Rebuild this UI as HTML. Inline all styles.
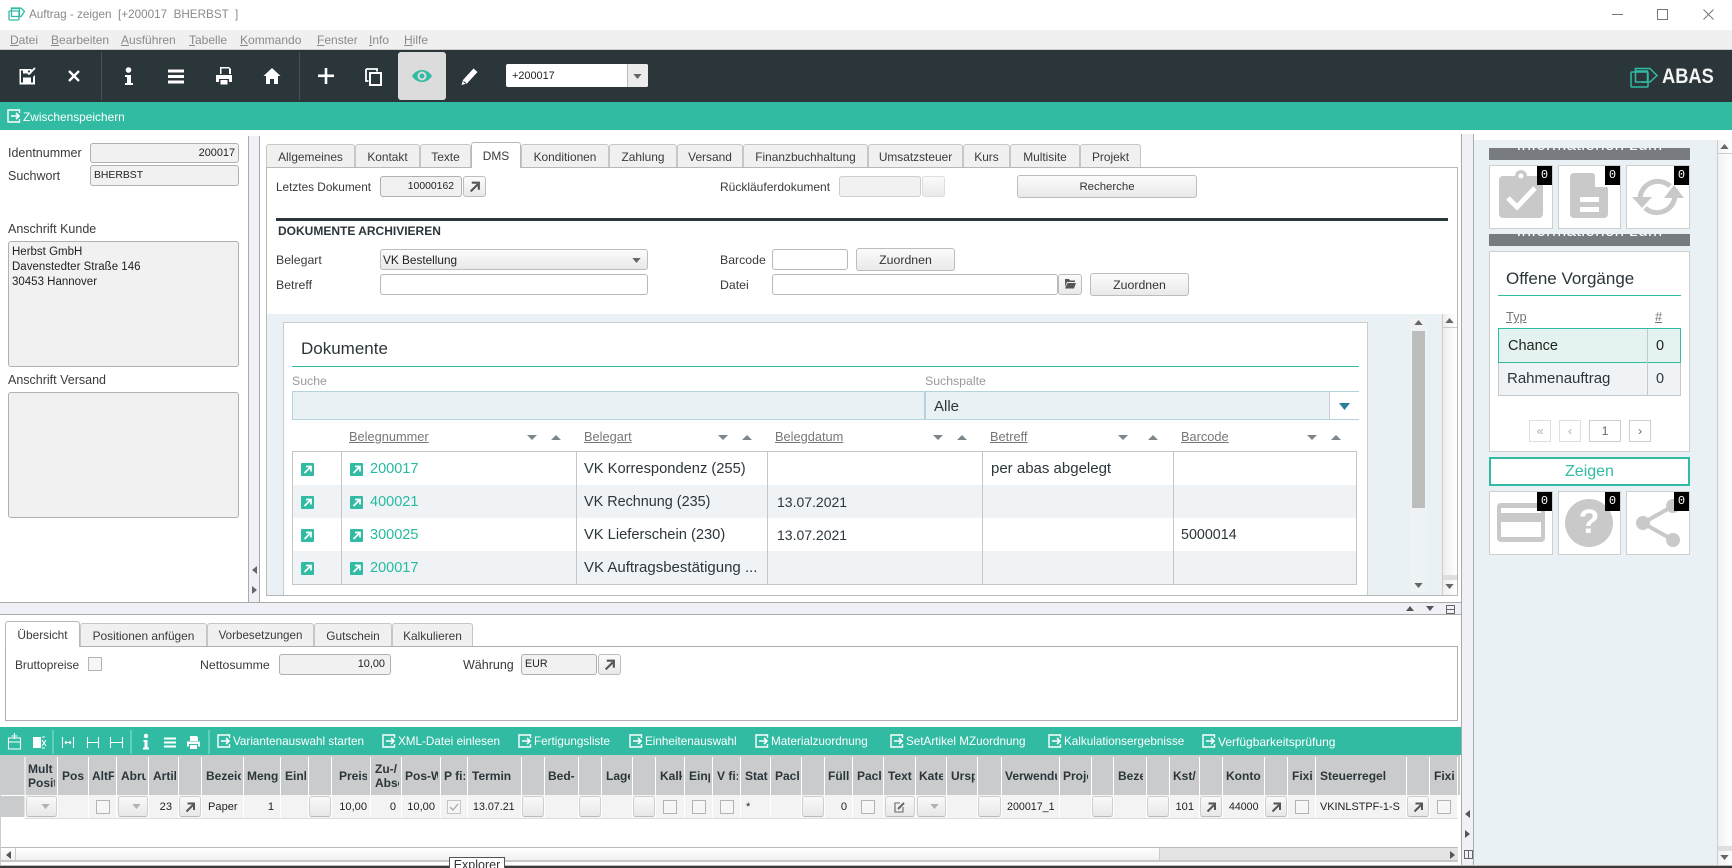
<!DOCTYPE html>
<html lang="de"><head><meta charset="utf-8"><title>Auftrag - zeigen</title>
<style>
html,body{margin:0;padding:0;width:1732px;height:868px;overflow:hidden;background:#fff}
body{position:relative;font-family:"Liberation Sans",sans-serif;font-size:12.3px;color:#3a3a3a}
div,svg,span.a{position:absolute}
svg{overflow:visible}
.t{white-space:nowrap;line-height:16px;height:16px}
.r{text-align:right}
.w{color:#fff;font-size:11.7px}
.m{color:#8a8a8a;top:32px;font-size:12px}
.m u{text-decoration:underline}
.f{background:#f1f1f1;border:1px solid #b0b0b0;border-radius:3px;box-sizing:border-box}
.n{font-size:10.9px;color:#222}
.i{background:#fff;border:1px solid #b8b8b8;border-radius:3px;box-sizing:border-box}
.b{background:linear-gradient(#fbfbfb,#e9e9e9);border:1px solid #bdbdbd;border-radius:3px;box-sizing:border-box;text-align:center;color:#333;line-height:22px}
.tab{background:#f0f0f0;border:1px solid #c6c6c6;border-bottom:0;border-radius:3px 3px 0 0;box-sizing:border-box;text-align:center;line-height:25px;height:23px;top:144px;color:#3a3a3a;font-size:11.9px}
.ta{background:#fff;height:26px;top:142px;line-height:27px;border-color:#b8b8b8;z-index:2}
.h{color:#777;text-decoration:underline;font-size:12.8px}
.g{color:#2b363b;font-weight:bold;font-size:12px;white-space:nowrap;overflow:hidden;height:15px;line-height:15px;top:769px}
.g2{top:762px}.g3{top:776px}
.d{top:799px;color:#222;font-size:11.1px}
.gb{top:796px;height:21px;background:linear-gradient(#f9f9f9,#e8e8e8);border:1px solid #cfcfcf;border-bottom-color:#bbb;border-radius:3px;box-sizing:border-box}
.cb{top:800px;width:14px;height:14px;background:#f6f6f6;border:1px solid #b4b4b4;box-sizing:border-box}
.l{font-size:14.5px;color:#26ba9f}
.c{font-size:14.7px;color:#2b363b}
.tile{background:#fff;border:1px solid #cfcfcf;box-sizing:border-box;height:64px}
.bd{background:#000;color:#fff;width:15px;height:19px;text-align:center;line-height:18px;font-size:12px;font-family:"Liberation Mono",monospace}
.bar{left:1489px;width:201px;height:12px;background:#787c80;overflow:hidden;color:#fff;font-size:17px;text-align:center;line-height:20px;letter-spacing:.3px}
.bar span{position:relative;top:-13px;display:block}
.pg{top:420px;height:22px;width:22px;background:#fff;border:1px solid #dfdfdf;box-sizing:border-box;text-align:center;color:#aaa;line-height:20px}
</style></head><body>
<svg width="0" height="0" style="position:absolute">
<symbol id="ac" viewBox="0 0 14 14"><path d="M12.5 4V1H1v12h11.5v-3" fill="none" stroke="#fff" stroke-width="1.4"/><path d="M4 7h8M9 4l3 3-3 3" fill="none" stroke="#fff" stroke-width="1.6"/></symbol>
<symbol id="lk" viewBox="0 0 12 12"><path d="M2.5 10.5L9 4M3.5 2.5H10V9" fill="none" stroke="#555" stroke-width="2"/></symbol>
<symbol id="gl" viewBox="0 0 13 13"><rect width="13" height="13" rx="1" fill="#31bba3"/><path d="M3.5 10L9 4.5M5 3.5h5v5" fill="none" stroke="#fff" stroke-width="1.7"/></symbol>
<symbol id="dn" viewBox="0 0 10 6"><path d="M0 0h10L5 6z" fill="#666"/></symbol>
<symbol id="up" viewBox="0 0 10 6"><path d="M0 6h10L5 0z" fill="#666"/></symbol>
</svg>

<!-- title -->
<svg style="left:8px;top:7px" width="18" height="14" viewBox="0 0 18 14" fill="none" stroke="#31bba3" stroke-width="1.3"><path d="M3.5 2.5V1H13l3.5 3.5L13 9.500h-2"/><rect x="1" y="4" width="10" height="9" rx="1"/><rect x="3.500" y="1.500" width="8" height="8"/></svg>
<div class="t" style="left:29px;top:7px;color:#8a8a8a;font-size:11.7px;white-space:pre">Auftrag - zeigen  [+200017  BHERBST  ]</div>
<svg style="left:1610px;top:8px" width="106" height="14" fill="none" stroke="#777"><path d="M2 6.500h11"/><rect x="47.500" y="1.500" width="10" height="10"/><path d="M93.500 1.500l10 10M103.500 1.500l-10 10"/></svg>

<!-- menu -->
<div style="left:0;top:30px;width:1732px;height:20px;background:#f0f0f0;border-bottom:1px solid #ccc;box-sizing:border-box"></div>
<div class="t m" style="left:10px"><u>D</u>atei</div>
<div class="t m" style="left:51px"><u>B</u>earbeiten</div>
<div class="t m" style="left:121px"><u>A</u>usführen</div>
<div class="t m" style="left:189px"><u>T</u>abelle</div>
<div class="t m" style="left:240px"><u>K</u>ommando</div>
<div class="t m" style="left:317px"><u>F</u>enster</div>
<div class="t m" style="left:369px"><u>I</u>nfo</div>
<div class="t m" style="left:404px"><u>H</u>ilfe</div>

<!-- toolbar -->
<div style="left:0;top:50px;width:1732px;height:52px;background:#2b363b"></div>
<div style="left:101px;top:52px;width:1px;height:48px;background:#46525a"></div>
<div style="left:299px;top:52px;width:1px;height:48px;background:#46525a"></div>
<div style="left:398px;top:52px;width:48px;height:48px;background:#dcdcdc;border-radius:3px"></div>
<svg style="left:0;top:50px" width="500" height="52" fill="#fff" stroke="none">
<path d="M19.500 19h12v4l-1.500 1.500v-4H21v12h2v-5h8v5h2V27l2-2v9.500H19.500z"/><rect x="25" y="29" width="4" height="3"/><rect x="23" y="20.500" width="5" height="3"/><path d="M26 21l3 3 6-6" fill="none" stroke="#fff" stroke-width="1.800"/>
<path d="M69 21l10 10M79 21L69 31" stroke="#fff" stroke-width="2.300" fill="none"/>
<circle cx="128.500" cy="20" r="2.800"/><path d="M125 25h6v8h2v2h-8v-2h2v-6h-2z"/>
<rect x="168" y="19.500" width="16" height="3"/><rect x="168" y="25" width="16" height="3"/><rect x="168" y="30.500" width="16" height="3"/>
<path d="M220 17h9l2 2v5h-2v-5.500h-7.500V24H220zM216 25h16v7h-3v-3h-10v3h-3zM220.500 30h7v4.500h-7z"/>
<path d="M272 18l8.500 8H278v8h-4v-5h-4v5h-4v-8h-2.500z"/>
<rect x="318" y="24.500" width="16" height="2.600"/><rect x="324.700" y="18" width="2.600" height="16"/>
<path d="M366 19h11v2.500M366 19v12h2.500" fill="none" stroke="#fff" stroke-width="1.800"/><rect x="370" y="23" width="11" height="12" fill="none" stroke="#fff" stroke-width="2"/>
<path d="M412 26c5-8 15-8 20 0-5 8-15 8-20 0z" fill="#31bba3"/><circle cx="422" cy="26" r="4.500" fill="#dcdcdc"/><circle cx="422" cy="26" r="2.500" fill="#31bba3"/>
<path d="M461.500 35l1.500-5 10.500-11.500 4 3.500L467 33.500z"/><path d="M463.500 31.500l2.500 2" stroke="#2b363b" stroke-width="1" fill="none"/>
</svg>
<div style="left:506px;top:64px;width:142px;height:23px;background:#fff;border-radius:2px"></div>
<div style="left:627px;top:64px;width:21px;height:23px;background:#ececec;border-left:1px solid #bbb;box-sizing:border-box;border-radius:0 2px 2px 0"></div>
<svg style="left:633px;top:74px" width="9" height="5"><use href="#dn"/></svg>
<div class="t n" style="left:512px;top:68px">+200017</div>
<svg style="left:1630px;top:67px" width="29" height="21" viewBox="0 0 29 21" fill="none" stroke="#31bba3" stroke-width="1.500"><path d="M5.500 4V1.500H20L27 8.500 20 15H11"/><rect x="1" y="5" width="17" height="15" rx="1"/><rect x="5.500" y="4" width="12" height="11"/></svg>
<div class="t" style="left:1662px;top:66px;color:#f4f4f4;font-weight:bold;font-size:21px;line-height:22px;height:22px;transform:scaleX(.87);transform-origin:0 0">ABAS</div>

<!-- teal bar -->
<div style="left:0;top:102px;width:1732px;height:28px;background:#31bba3"></div>
<svg style="left:7px;top:109px" width="14" height="14"><use href="#ac"/></svg>
<div class="t w" style="left:23px;top:109px;font-size:11.9px">Zwischenspeichern</div>

<!-- left -->
<div class="t" style="left:8px;top:145px;font-size:12.5px">Identnummer</div>
<div class="f t r n" style="left:90px;top:143px;width:149px;height:20px;padding-right:3px;line-height:18px">200017</div>
<div class="t" style="left:8px;top:168px;font-size:12.5px">Suchwort</div>
<div class="f t n" style="left:90px;top:165px;width:149px;height:21px;padding-left:3px;line-height:19px;font-size:10.4px">BHERBST</div>
<div class="t" style="left:8px;top:221px;font-size:12.5px">Anschrift Kunde</div>
<div class="f" style="left:8px;top:241px;width:231px;height:126px"></div>
<div class="t" style="left:12px;top:244px;color:#222;font-size:11.5px">Herbst GmbH</div>
<div class="t" style="left:12px;top:259px;color:#222;font-size:11.5px">Davenstedter Straße 146</div>
<div class="t" style="left:12px;top:274px;color:#222;font-size:11.5px">30453 Hannover</div>
<div class="t" style="left:8px;top:372px;font-size:12.5px">Anschrift Versand</div>
<div class="f" style="left:8px;top:392px;width:231px;height:126px"></div>

<!-- vertical splitter left -->
<div style="left:248px;top:136px;width:12px;height:466px;background:#f0f0f7;border-left:1px solid #aaa;border-right:1px solid #aaa;box-sizing:border-box"></div>
<svg style="left:252px;top:566px" width="6" height="30" fill="#666"><path d="M5 0v8L0 4zM0 20v8l5-4z"/></svg>

<!-- main tabs -->
<div style="left:266px;top:167px;width:1192px;height:429px;border:1px solid #b8b8b8;box-sizing:border-box;background:#fff"></div>
<div class="tab" style="left:266px;width:89px">Allgemeines</div>
<div class="tab" style="left:355px;width:65px">Kontakt</div>
<div class="tab" style="left:420px;width:51px">Texte</div>
<div class="tab ta" style="left:471px;width:50px">DMS</div>
<div class="tab" style="left:521px;width:88px">Konditionen</div>
<div class="tab" style="left:609px;width:68px">Zahlung</div>
<div class="tab" style="left:677px;width:66px">Versand</div>
<div class="tab" style="left:743px;width:125px">Finanzbuchhaltung</div>
<div class="tab" style="left:868px;width:95px">Umsatzsteuer</div>
<div class="tab" style="left:963px;width:47px">Kurs</div>
<div class="tab" style="left:1010px;width:70px">Multisite</div>
<div class="tab" style="left:1080px;width:61px">Projekt</div>

<div class="t" style="left:276px;top:179px;font-size:11.8px">Letztes Dokument</div>
<div class="f t r n" style="left:380px;top:176px;width:82px;height:21px;padding-right:7px;line-height:19px;font-size:10.4px">10000162</div>
<div class="b" style="left:463px;top:176px;width:23px;height:21px"></div>
<svg style="left:468px;top:180px" width="13" height="13"><use href="#lk"/></svg>
<div class="t" style="left:720px;top:179px;font-size:12px">Rückläuferdokument</div>
<div class="f" style="left:839px;top:176px;width:82px;height:21px;border-color:#ccc"></div>
<div class="b" style="left:922px;top:176px;width:23px;height:21px;border-color:#ddd"></div>
<div class="b" style="left:1017px;top:175px;width:180px;height:23px;font-size:11.4px">Recherche</div>
<div style="left:276px;top:218px;width:1172px;height:3px;background:#2b363b"></div>
<div class="t" style="left:278px;top:223px;font-weight:bold;font-size:12px;color:#2b363b">DOKUMENTE ARCHIVIEREN</div>
<div class="t" style="left:276px;top:252px">Belegart</div>
<div class="b" style="left:380px;top:249px;width:268px;height:21px;text-align:left;padding-left:2px;line-height:20px;color:#222;font-size:11.8px">VK Bestellung</div>
<svg style="left:632px;top:258px" width="9" height="5"><use href="#dn"/></svg>
<div class="t" style="left:276px;top:277px">Betreff</div>
<div class="i" style="left:380px;top:274px;width:268px;height:21px"></div>
<div class="t" style="left:720px;top:252px">Barcode</div>
<div class="i" style="left:772px;top:249px;width:76px;height:21px"></div>
<div class="b" style="left:856px;top:248px;width:99px;height:23px">Zuordnen</div>
<div class="t" style="left:720px;top:277px">Datei</div>
<div class="i" style="left:772px;top:274px;width:286px;height:21px"></div>
<div class="b" style="left:1058px;top:274px;width:24px;height:21px"></div>
<svg style="left:1065px;top:279px" width="11" height="10" fill="#555"><path d="M0 0h4l1 1.500h5V3H2L0 8zM2.500 4H11L9 9.500H0z"/></svg>
<div class="b" style="left:1090px;top:273px;width:99px;height:23px">Zuordnen</div>

<!-- DMS lower -->
<div style="left:267px;top:314px;width:1190px;height:281px;background:#e9f1f4"></div>
<div style="left:283px;top:322px;width:1085px;height:273px;background:#fff;border:1px solid #ccc;border-bottom:0;box-sizing:border-box"></div>
<div class="t" style="left:301px;top:338px;font-size:17px;line-height:22px;height:22px;color:#2b363b">Dokumente</div>
<div style="left:292px;top:366px;width:1067px;height:1px;background:#31bba3"></div>
<div class="t" style="left:292px;top:373px;color:#999">Suche</div>
<div class="t" style="left:925px;top:373px;color:#999">Suchspalte</div>
<div style="left:292px;top:391px;width:1067px;height:29px;background:#e9f1f4;border:1px solid #b3d3df;box-sizing:border-box"></div>
<div style="left:924px;top:391px;width:2px;height:29px;background:#b3d3df"></div>
<div style="left:1329px;top:392px;width:29px;height:27px;background:#fff;border-left:1px solid #ccd"></div>
<svg style="left:1339px;top:403px" width="11" height="7"><path d="M0 0h11L5.500 7z" fill="#2a7d9c"/></svg>
<div class="t c" style="left:934px;top:399px;font-size:15px">Alle</div>

<div class="t h" style="left:349px;top:429px">Belegnummer</div>
<div class="t h" style="left:584px;top:429px">Belegart</div>
<div class="t h" style="left:775px;top:429px">Belegdatum</div>
<div class="t h" style="left:990px;top:429px">Betreff</div>
<div class="t h" style="left:1181px;top:429px">Barcode</div>
<svg style="left:0;top:434px" width="1400" height="7" fill="#7d868b"><path d="M527 1h10l-5 5zM551 6h10l-5-5zM718 1h10l-5 5zM742 6h10l-5-5zM933 1h10l-5 5zM957 6h10l-5-5zM1118 1h10l-5 5zM1148 6h10l-5-5zM1307 1h10l-5 5zM1331 6h10l-5-5z"/></svg>

<div style="left:292px;top:451px;width:1065px;height:134px;background:#fff;border:1px solid #c6c6c6;box-sizing:border-box"></div>
<div style="left:293px;top:485px;width:1063px;height:33px;background:#f0f3f6"></div>
<div style="left:293px;top:551px;width:1063px;height:33px;background:#f0f3f6"></div>
<svg style="left:0;top:451px" width="1400" height="134" stroke="#c6c6c6" fill="none"><path d="M341.500 0v134M576.500 0v134M767.500 0v134M982.500 0v134M1173.500 0v134"/></svg>
<svg style="left:301px;top:463px" width="13" height="13"><use href="#gl"/></svg><svg style="left:350px;top:463px" width="13" height="13"><use href="#gl"/></svg>
<svg style="left:301px;top:496px" width="13" height="13"><use href="#gl"/></svg><svg style="left:350px;top:496px" width="13" height="13"><use href="#gl"/></svg>
<svg style="left:301px;top:529px" width="13" height="13"><use href="#gl"/></svg><svg style="left:350px;top:529px" width="13" height="13"><use href="#gl"/></svg>
<svg style="left:301px;top:562px" width="13" height="13"><use href="#gl"/></svg><svg style="left:350px;top:562px" width="13" height="13"><use href="#gl"/></svg>
<div class="t l" style="left:370px;top:461px">200017</div>
<div class="t l" style="left:370px;top:494px">400021</div>
<div class="t l" style="left:370px;top:527px">300025</div>
<div class="t l" style="left:370px;top:560px">200017</div>
<div class="t c" style="left:584px;top:461px">VK Korrespondenz (255)</div>
<div class="t c" style="left:584px;top:494px;font-size:14.4px">VK Rechnung (235)</div>
<div class="t c" style="left:584px;top:527px">VK Lieferschein (230)</div>
<div class="t c" style="left:584px;top:560px;font-size:15px">VK Auftragsbestätigung ...</div>
<div class="t c" style="left:777px;top:494px;font-size:14px">13.07.2021</div>
<div class="t c" style="left:777px;top:527px;font-size:14px">13.07.2021</div>
<div class="t c" style="left:991px;top:461px;font-size:15px">per abas abgelegt</div>
<div class="t c" style="left:1181px;top:527px;font-size:14.3px">5000014</div>

<!-- inner scroll -->
<div style="left:1410px;top:318px;width:17px;height:274px;background:#eef2f4"></div>
<div style="left:1412px;top:331px;width:13px;height:177px;background:#bdbdbd"></div>
<svg style="left:1414px;top:320px" width="9" height="5"><use href="#up"/></svg>
<svg style="left:1414px;top:583px" width="9" height="5"><use href="#dn"/></svg>
<div style="left:1442px;top:314px;width:15px;height:281px;background:linear-gradient(90deg,#eee,#fff);border-left:1px solid #ccc;box-sizing:border-box"></div>
<div style="left:1443px;top:327px;width:14px;height:1px;background:#ccc"></div>
<div style="left:1443px;top:575px;width:14px;height:5px;background:#dfdfdf"></div>
<svg style="left:1445px;top:318px" width="9" height="5"><use href="#up"/></svg>
<svg style="left:1445px;top:584px" width="9" height="5"><use href="#dn"/></svg>

<!-- horizontal splitter -->
<div style="left:0;top:602px;width:1461px;height:13px;background:#f0f0f7;border-top:1px solid #aaa;border-bottom:1px solid #aaa;box-sizing:border-box"></div>
<svg style="left:1405px;top:605px" width="50" height="9" fill="#555"><path d="M1 6h8L5 1zM21 1h8l-4 5z"/><rect x="41.500" y="0.500" width="8" height="8" fill="none" stroke="#666"/><path d="M41.500 4.500h8" stroke="#666"/></svg>

<!-- bottom tabs -->
<div style="left:5px;top:646px;width:1453px;height:75px;border:1px solid #b0b0b0;box-sizing:border-box;background:#fff"></div>
<div class="tab ta" style="left:5px;width:75px;top:621px;line-height:26px;height:26px">Übersicht</div>
<div class="tab" style="left:80px;width:127px;top:623px;line-height:24px">Positionen anfügen</div>
<div class="tab" style="left:207px;width:107px;top:623px;line-height:24px;font-size:11.6px">Vorbesetzungen</div>
<div class="tab" style="left:314px;width:78px;top:623px;line-height:24px">Gutschein</div>
<div class="tab" style="left:392px;width:81px;top:623px;line-height:24px">Kalkulieren</div>
<div class="t" style="left:15px;top:657px;font-size:11.9px">Bruttopreise</div>
<div class="cb" style="left:88px;top:657px"></div>
<div class="t" style="left:200px;top:657px">Nettosumme</div>
<div class="f t r n" style="left:279px;top:654px;width:112px;height:21px;padding-right:5px;line-height:19px">10,00</div>
<div class="t" style="left:463px;top:657px;font-size:12.5px">Währung</div>
<div class="f t n" style="left:521px;top:654px;width:76px;height:21px;padding-left:3px;line-height:19px;font-size:10.7px">EUR</div>
<div class="b" style="left:598px;top:654px;width:23px;height:21px"></div>
<svg style="left:603px;top:658px" width="13" height="13"><use href="#lk"/></svg>

<!-- green bar -->
<div style="left:0;top:727px;width:1461px;height:28px;background:#31bba3"></div>
<svg style="left:0;top:727px" width="215" height="28" fill="none" stroke="#fff" stroke-width="1.100">
<path d="M8.500 11h12v11h-12zM14.500 6v6M11.500 9h6M8.500 15h12"/>
<rect x="33" y="10" width="8" height="11" fill="#fff" stroke="none"/><path d="M42 13l4 6M46 13l-4 6"/><path d="M42 10h3M42 21h3"/>
<path d="M53 3v24M131 3v24M209 3v24" stroke="#8ae0cf"/>
<path d="M62.500 10v11M73.500 10v11M65 15.500h6M65 15.500l1.500-1.500M65 15.500l1.500 1.500M71 15.500l-1.500-1.500M71 15.500l-1.500 1.500"/>
<path d="M87.500 10v11M98.500 10v11M88 15.500h10"/>
<path d="M110.500 10v11M122.500 10v11M111 15.500h11"/>
<circle cx="146" cy="9" r="2.200" fill="#fff" stroke="none"/><path d="M143.500 13h4v7.500h1.500v2h-6v-2h1.500V15h-1z" fill="#fff" stroke="none"/>
<path d="M164 11.500h12M164 15.500h12M164 19.500h12" stroke-width="2"/>
<path d="M190 9h7l1 1.500V14h-8zM187 14.500h13v5h-2V17h-9v2.500h-2zM190 18h7v4h-7z" fill="#fff" stroke="none"/>
</svg>
<svg style="left:217px;top:734px" width="14" height="14"><use href="#ac"/></svg><div class="t w" style="left:233px;top:734px">Variantenauswahl starten</div>
<svg style="left:382px;top:734px" width="14" height="14"><use href="#ac"/></svg><div class="t w" style="left:398px;top:734px">XML-Datei einlesen</div>
<svg style="left:518px;top:734px" width="14" height="14"><use href="#ac"/></svg><div class="t w" style="left:534px;top:734px">Fertigungsliste</div>
<svg style="left:629px;top:734px" width="14" height="14"><use href="#ac"/></svg><div class="t w" style="left:645px;top:734px">Einheitenauswahl</div>
<svg style="left:755px;top:734px" width="14" height="14"><use href="#ac"/></svg><div class="t w" style="left:771px;top:734px">Materialzuordnung</div>
<svg style="left:890px;top:734px" width="14" height="14"><use href="#ac"/></svg><div class="t w" style="left:906px;top:734px">SetArtikel MZuordnung</div>
<svg style="left:1048px;top:734px" width="14" height="14"><use href="#ac"/></svg><div class="t w" style="left:1064px;top:734px">Kalkulationsergebnisse</div>
<svg style="left:1202px;top:734px" width="14" height="14"><use href="#ac"/></svg><div class="t w" style="left:1218px;top:734px;font-size:12px">Verfügbarkeitsprüfung</div>

<!-- grid -->
<div style="left:0;top:755px;width:1460px;height:40px;background:#c9cbcd"></div>
<div style="left:25px;top:795px;width:1433px;height:23px;background:#f3f3f3"></div>
<div style="left:1px;top:795px;width:24px;height:22px;background:#c9cbcd;border-top:1px solid #fff;box-sizing:border-box"></div>
<div style="left:25px;top:818px;width:1433px;height:1px;background:#ddd"></div>
<svg style="left:0;top:757px" width="1460" height="62" stroke="#fff" fill="none"><path d="M25 0v61M57.500 0v61M88.500 0v61M116.500 0v61M148.500 0v61M178.500 0v61M201.500 0v61M243.500 0v61M280.500 0v61M308.500 0v61M331.500 0v61M370.500 0v61M401.500 0v61M440.500 0v61M467.500 0v61M521.500 0v61M544.500 0v61M578.500 0v61M601.500 0v61M632.500 0v61M655.500 0v61M684.500 0v61M712.500 0v61M740.500 0v61M770.500 0v61M801.500 0v61M824.500 0v61M852.500 0v61M883.500 0v61M915.500 0v61M946.500 0v61M977.500 0v61M1001.500 0v61M1059.500 0v61M1091.500 0v61M1113.500 0v61M1146.500 0v61M1169.500 0v61M1199.500 0v61M1222.500 0v61M1264.500 0v61M1287.500 0v61M1315.500 0v61M1406.500 0v61M1429.500 0v61M1457.500 0v61"/></svg>
<div class="g g2" style="left:28px;width:27px">Mult</div><div class="g g3" style="left:28px;width:27px">Posit</div>
<div class="g" style="left:62px;width:25px">Pos</div>
<div class="g" style="left:92px;width:22px">AltF</div>
<div class="g" style="left:121px;width:25px">Abru</div>
<div class="g" style="left:153px;width:23px">Artil</div>
<div class="g" style="left:206px;width:35px">Bezeic</div>
<div class="g" style="left:247px;width:31px">Meng</div>
<div class="g" style="left:285px;width:21px">Einh</div>
<div class="g" style="left:339px;width:28px">Preis</div>
<div class="g g2" style="left:375px;width:24px">Zu-/</div><div class="g g3" style="left:375px;width:24px">Absc</div>
<div class="g" style="left:405px;width:33px">Pos-W</div>
<div class="g" style="left:444px;width:21px">P fi:</div>
<div class="g" style="left:472px;width:45px">Termin</div>
<div class="g" style="left:548px;width:28px">Bed-</div>
<div class="g" style="left:606px;width:24px">Lage</div>
<div class="g" style="left:660px;width:22px">Kalk</div>
<div class="g" style="left:689px;width:21px">Einp</div>
<div class="g" style="left:717px;width:21px">V fi:</div>
<div class="g" style="left:745px;width:24px">Stat</div>
<div class="g" style="left:775px;width:24px">Pack</div>
<div class="g" style="left:828px;width:23px">Füll</div>
<div class="g" style="left:857px;width:24px">Pack</div>
<div class="g" style="left:888px;width:26px">Text</div>
<div class="g" style="left:919px;width:24px">Kate</div>
<div class="g" style="left:951px;width:24px">Ursp</div>
<div class="g" style="left:1005px;width:52px">Verwendung</div>
<div class="g" style="left:1063px;width:25px">Projekt</div>
<div class="g" style="left:1118px;width:25px">Bezeichnung</div>
<div class="g" style="left:1173px;width:24px">Kst/</div>
<div class="g" style="left:1226px;width:36px">Konto</div>
<div class="g" style="left:1292px;width:21px">Fixier</div>
<div class="g" style="left:1320px;width:84px">Steuerregel</div>
<div class="g" style="left:1434px;width:21px">Fixier</div>

<div class="gb" style="left:26px;width:31px"></div><svg style="left:41px;top:804px" width="9" height="5"><use href="#dn" opacity=".45"/></svg>
<div class="cb" style="left:96px"></div>
<div class="gb" style="left:118px;width:30px"></div><svg style="left:132px;top:804px" width="9" height="5"><use href="#dn" opacity=".45"/></svg>
<div class="t d r" style="left:150px;width:22px">23</div>
<div class="gb" style="left:179px;width:22px"></div><svg style="left:184px;top:801px" width="12" height="12"><use href="#lk"/></svg>
<div class="t d" style="left:208px">Paper</div>
<div class="t d r" style="left:250px;width:24px">1</div>
<div class="gb" style="left:309px;width:22px"></div>
<div class="t d r" style="left:335px;width:32px">10,00</div>
<div class="t d r" style="left:375px;width:21px">0</div>
<div class="t d r" style="left:403px;width:32px">10,00</div>
<div class="cb" style="left:447px;border-color:#c4c4c4"></div><svg style="left:449px;top:803px" width="10" height="8" fill="none" stroke="#aaa" stroke-width="1.300"><path d="M1 4l3 3 5-6"/></svg>
<div class="t d" style="left:473px;font-size:10.7px">13.07.21</div>
<div class="gb" style="left:522px;width:22px"></div>
<div class="gb" style="left:579px;width:22px"></div>
<div class="gb" style="left:633px;width:22px"></div>
<div class="cb" style="left:663px"></div>
<div class="cb" style="left:692px"></div>
<div class="cb" style="left:720px"></div>
<div class="t d" style="left:746px">*</div>
<div class="gb" style="left:802px;width:22px"></div>
<div class="t d r" style="left:830px;width:17px">0</div>
<div class="cb" style="left:861px"></div>
<div class="gb" style="left:885px;width:30px"></div><svg style="left:893px;top:800px" width="13" height="13" fill="none" stroke="#666"><path d="M7 3H2v9h8V7" stroke-width="1.100"/><path d="M5 9l6-6" stroke-width="2"/></svg>
<div class="gb" style="left:917px;width:29px"></div><svg style="left:930px;top:804px" width="9" height="5"><use href="#dn" opacity=".45"/></svg>
<div class="gb" style="left:978px;width:23px"></div>
<div class="t d" style="left:1007px;font-size:10.7px">200017_1</div>
<div class="gb" style="left:1092px;width:21px"></div>
<div class="gb" style="left:1147px;width:22px"></div>
<div class="t d r" style="left:1172px;width:22px">101</div>
<div class="gb" style="left:1200px;width:22px"></div><svg style="left:1205px;top:801px" width="12" height="12"><use href="#lk"/></svg>
<div class="t d" style="left:1229px;font-size:10.6px">44000</div>
<div class="gb" style="left:1265px;width:22px"></div><svg style="left:1270px;top:801px" width="12" height="12"><use href="#lk"/></svg>
<div class="cb" style="left:1295px"></div>
<div class="t d" style="left:1320px;font-size:10.9px">VKINLSTPF-1-S</div>
<div class="gb" style="left:1407px;width:22px"></div><svg style="left:1412px;top:801px" width="12" height="12"><use href="#lk"/></svg>
<div class="cb" style="left:1437px"></div>

<!-- grid scrollbar -->
<div style="left:0;top:847px;width:1458px;height:15px;background:linear-gradient(#fff,#f0f0f0);border-top:1px solid #bbb;border-bottom:2px solid #c8c8c8;box-sizing:border-box"></div>
<div style="left:0;top:755px;width:1px;height:110px;background:#ccc"></div>
<div style="left:1159px;top:848px;width:299px;height:12px;background:#e4e4e4;border-left:1px solid #ccc;box-sizing:border-box"></div>
<div style="left:15px;top:848px;width:1px;height:12px;background:#ccc"></div>
<svg style="left:6px;top:851px" width="5" height="8" fill="#555"><path d="M5 0v8L0 4z"/></svg>
<svg style="left:1450px;top:851px" width="5" height="8" fill="#555"><path d="M0 0v8l5-4z"/></svg>

<!-- vertical splitter right -->
<div style="left:1461px;top:134px;width:13px;height:731px;background:#f0f0f7;border-left:1px solid #aaa;border-right:1px solid #aaa;box-sizing:border-box"></div>
<svg style="left:1464px;top:810px" width="8" height="50" fill="#555"><path d="M6 0v8L1 4zM1 20v8l5-4z"/><rect x="0.500" y="40.500" width="8" height="8" fill="none" stroke="#666"/><path d="M4.500 40.500v8" stroke="#666"/></svg>

<!-- right panel -->
<div style="left:1474px;top:140px;width:243px;height:725px;background:#e9f1f4"></div>
<div style="left:1717px;top:140px;width:15px;height:725px;background:linear-gradient(90deg,#f2f2f2,#fff);border-left:1px solid #ccc;box-sizing:border-box"></div>
<div style="left:1718px;top:153px;width:14px;height:1px;background:#ccc"></div>
<div style="left:1718px;top:846px;width:14px;height:5px;background:#dfdfdf"></div>
<svg style="left:1720px;top:144px" width="9" height="5"><use href="#up"/></svg>
<svg style="left:1720px;top:855px" width="9" height="5"><use href="#dn"/></svg>

<div class="bar" style="top:148px"><span>Informationen zum</span></div>
<div class="tile" style="left:1489px;top:165px;width:64px"></div>
<div class="tile" style="left:1558px;top:165px;width:63px"></div>
<div class="tile" style="left:1626px;top:165px;width:64px"></div>
<svg style="left:1489px;top:165px" width="201" height="64" fill="#c9c9c9">
<rect x="10" y="11" width="44" height="42" rx="4"/><circle cx="32" cy="11" r="6"/><circle cx="32" cy="11" r="2.500" fill="#fff"/><path d="M19 33l9 9 18-19" fill="none" stroke="#fff" stroke-width="5"/>
<path d="M85 8h19l15 15v26a4 4 0 0 1-4 4H85a4 4 0 0 1-4-4V12a4 4 0 0 1 4-4z"/><path d="M106 9l12 13h-12z" fill="#fff"/><rect x="91" y="32" width="19" height="5" fill="#fff"/><rect x="91" y="42" width="19" height="5" fill="#fff"/>
<path d="M151 33a18 18 0 0 1 30-12" fill="none" stroke="#c9c9c9" stroke-width="5"/><path d="M186 31a18 18 0 0 1-30 12" fill="none" stroke="#c9c9c9" stroke-width="5"/><path d="M143 32h20l-10 11zM175 33h20l-10-13z"/>
</svg>
<div class="bd" style="left:1537px;top:166px">0</div>
<div class="bd" style="left:1605px;top:166px">0</div>
<div class="bd" style="left:1674px;top:166px">0</div>
<div class="bar" style="top:234px"><span>Informationen zum</span></div>

<div style="left:1489px;top:251px;width:201px;height:201px;background:#fff;border:1px solid #cfcfcf;box-sizing:border-box"></div>
<div class="t" style="left:1506px;top:267px;font-size:17px;line-height:24px;height:24px;color:#2b363b">Offene Vorgänge</div>
<div style="left:1498px;top:295px;width:183px;height:1px;background:#31bba3"></div>
<div class="t h" style="left:1506px;top:309px">Typ</div>
<div class="t h" style="left:1655px;top:309px">#</div>
<div style="left:1498px;top:328px;width:183px;height:68px;background:#f0f3f6;border:1px solid #c8c8c8;box-sizing:border-box"></div>
<div style="left:1498px;top:328px;width:183px;height:35px;background:#e4f3ef;border:1px solid #31bba3;box-sizing:border-box"></div>
<div style="left:1647px;top:329px;width:1px;height:66px;background:#c8c8c8"></div>
<div class="t c" style="left:1508px;top:338px;color:#222;font-size:14.5px">Chance</div>
<div class="t c" style="left:1656px;top:338px;color:#222;font-size:14.5px">0</div>
<div class="t c" style="left:1507px;top:371px;font-size:15px">Rahmenauftrag</div>
<div class="t c" style="left:1656px;top:371px;font-size:14.5px">0</div>
<div class="pg" style="left:1529px">«</div>
<div class="pg" style="left:1559px">‹</div>
<div class="pg" style="left:1589px;width:32px;border-color:#ccc;color:#666">1</div>
<div class="pg" style="left:1629px;border-color:#ccc;color:#666">›</div>
<div style="left:1489px;top:457px;width:201px;height:29px;background:#fff;border:2px solid #31bba3;box-sizing:border-box;text-align:center;color:#31bba3;font-size:16px;line-height:26px">Zeigen</div>
<div class="tile" style="left:1489px;top:491px;width:64px"></div>
<div class="tile" style="left:1558px;top:491px;width:63px"></div>
<div class="tile" style="left:1626px;top:491px;width:64px"></div>
<svg style="left:1489px;top:491px" width="201" height="64" fill="#c9c9c9">
<rect x="8" y="12" width="48" height="39" rx="4"/><rect x="12" y="17" width="40" height="5" fill="#fff"/><rect x="12" y="31" width="40" height="15" fill="#fff"/>
<circle cx="100" cy="32" r="24"/>
<path d="M154 32L184 15M154 32L184 49" stroke="#c9c9c9" stroke-width="4"/><circle cx="154" cy="32" r="7"/><circle cx="184" cy="15" r="7"/><circle cx="184" cy="49" r="7"/>
</svg>
<div class="t" style="left:1569px;top:504px;width:40px;text-align:center;color:#fff;font-weight:bold;font-size:34px;line-height:36px;height:36px">?</div>
<div class="bd" style="left:1537px;top:492px">0</div>
<div class="bd" style="left:1605px;top:492px">0</div>
<div class="bd" style="left:1674px;top:492px">0</div>

<!-- bottom -->
<div style="left:0;top:865px;width:1732px;height:3px;background:#3a3a3a;border-top:1px solid #bbb;box-sizing:border-box"></div>
<div style="left:449px;top:857px;width:56px;height:11px;background:#fff;border:1px solid #555;border-bottom:0;box-sizing:border-box;overflow:hidden;text-align:center;font-size:12.5px;line-height:15px;color:#333">Explorer</div>
</body></html>
